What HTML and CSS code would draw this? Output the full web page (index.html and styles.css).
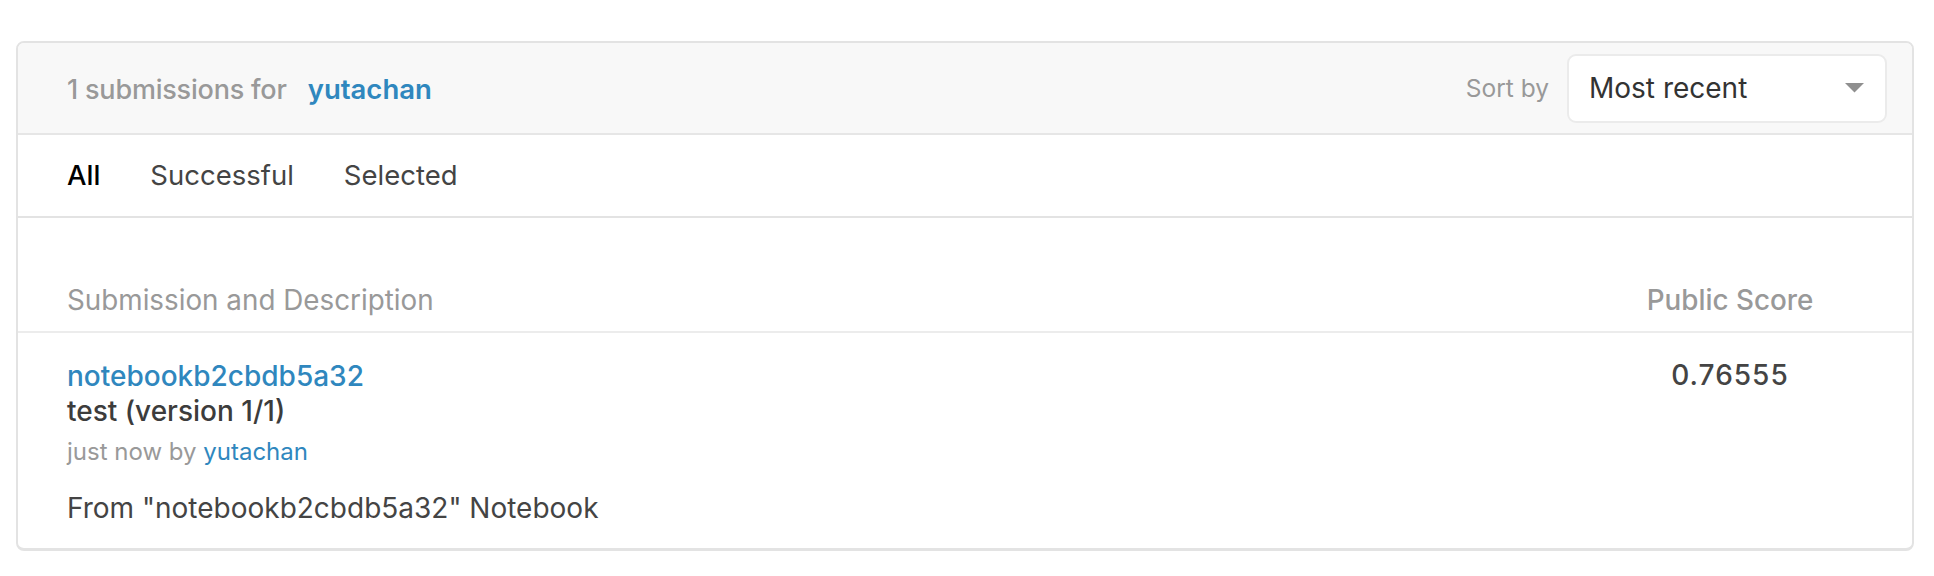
FILE: index.html
```html
<!DOCTYPE html>
<html lang="en">
<head>
<meta charset="utf-8">
<title>Submissions</title>
<link rel="stylesheet" href="styles.css">
</head>
<body>
<div class="page">
  <section class="card">
    <header class="card-header">
      <div class="title">
        <span class="count">1 submissions for</span>
        <a class="user-link" href="#">yutachan</a>
      </div>
      <div class="sort">
        <span class="sort-label">Sort by</span>
        <div class="select">
          <span class="select-value">Most recent</span>
          <svg class="caret" width="19" height="10" viewBox="0 0 19 10"><polygon points="0,0 19,0 9.5,9.5" fill="#8f8f8f"/></svg>
        </div>
      </div>
    </header>
    <nav class="tabs">
      <span class="tab active">All</span>
      <span class="tab">Successful</span>
      <span class="tab">Selected</span>
    </nav>
    <div class="col-head">
      <div class="col-desc">Submission and Description</div>
      <div class="col-score">Public Score</div>
    </div>
    <div class="row">
      <div class="col-desc">
        <a class="nb-link" href="#">notebookb2cbdb5a32</a>
        <div class="nb-title">test (version 1/1)</div>
        <div class="meta">just now by <a class="meta-user" href="#">yutachan</a></div>
        <div class="desc">From "notebookb2cbdb5a32" Notebook</div>
      </div>
      <div class="col-score score">0.76555</div>
    </div>
  </section>
</div>
</body>
</html>
```

FILE: styles.css
```css
html, body {
  margin: 0;
  padding: 0;
  background: #ffffff;
}
body {
  font-family: Inter, "Noto Sans", "Liberation Sans", sans-serif;
  color: #444;
}
a { text-decoration: none; }
.page {
  padding: 41px 20px 0 16px;
}
.card {
  box-sizing: border-box;
  width: 1898px;
  border: 2px solid #e3e3e3;
  border-bottom-width: 3px;
  border-radius: 8px;
  overflow: hidden;
  background: #fff;
}
.card-header {
  display: flex;
  align-items: center;
  justify-content: space-between;
  height: 90px;
  padding: 0 25px 0 49px;
  background: #f8f8f8;
  border-bottom: 2px solid #e6e6e6;
}
.title {
  display: flex;
  align-items: baseline;
  gap: 21px;
  font-size: 27px;
  padding-top: 2px;
}
.count { color: #999; font-weight: 500; letter-spacing: -0.2px; }
.user-link { color: #2f87be; font-weight: 600; font-size: 27.5px; }
.sort {
  display: flex;
  align-items: center;
  gap: 18px;
}
.sort-label {
  font-size: 24.5px;
  color: #999;
}
.select {
  box-sizing: border-box;
  width: 320px;
  height: 69px;
  display: flex;
  align-items: center;
  justify-content: space-between;
  padding: 0 21px 0 20px;
  background: #fff;
  border: 2px solid #ebebeb;
  border-radius: 9px;
}
.select-value {
  font-size: 28px;
  color: #333;
}
.caret { display: block; }
.tabs {
  display: flex;
  gap: 50px;
  height: 81px;
  align-items: center;
  padding-left: 49px;
  border-bottom: 2px solid #e3e3e3;
  font-size: 27.5px;
  line-height: 81px;
}
.tab { color: #444; }
.tab.active { color: #000; font-weight: 500; }
.col-head, .row {
  display: grid;
  grid-template-columns: 1fr 300px;
  padding: 0 32px 0 49px;
}
.col-head {
  padding-top: 62px;
  padding-bottom: 11px;
  border-bottom: 2px solid #ececec;
  font-size: 27.8px;
  line-height: 40px;
  color: #999;
}
.col-head .col-score {
  text-align: center;
  font-weight: 500;
}
.row {
  padding-top: 26px;
  padding-bottom: 21px;
}
.nb-link {
  display: block;
  font-size: 28px;
  line-height: 35px;
  color: #2f87be;
  font-weight: 500;
}
.nb-title {
  font-size: 28px;
  line-height: 35px;
  font-weight: 500;
  color: #3c3c3c;
}
.meta {
  margin-top: 6px;
  font-size: 24px;
  line-height: 33px;
  color: #999;
}
.meta-user { color: #2f87be; }
.desc {
  margin-top: 22px;
  font-size: 28px;
  line-height: 37px;
  color: #444;
}
.score {
  text-align: center;
  font-size: 28px;
  line-height: 37px;
  font-weight: 500;
  color: #444;
  letter-spacing: 1px;
  margin-top: -2px;
}
```
